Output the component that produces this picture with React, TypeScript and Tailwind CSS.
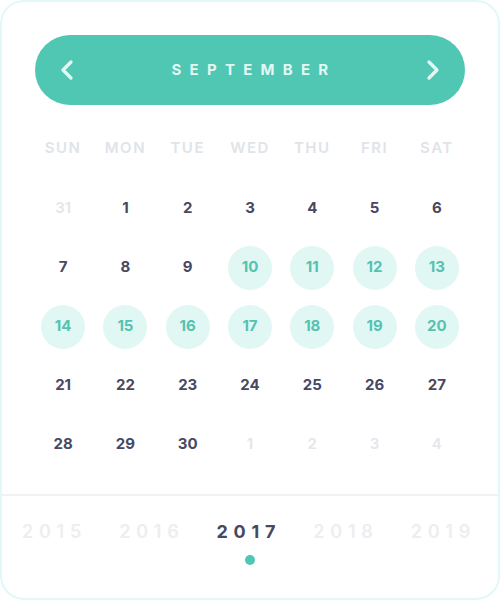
import { ChevronLeft, ChevronRight } from 'lucide-react';

const weekdays = ['SUN', 'MON', 'TUE', 'WED', 'THU', 'FRI', 'SAT'];

type Day = { n: number; muted?: boolean; picked?: boolean };

const days: Day[] = [
  { n: 31, muted: true },
  ...Array.from({ length: 30 }, (_, i) => ({ n: i + 1, picked: i + 1 >= 10 && i + 1 <= 20 })),
  { n: 1, muted: true },
  { n: 2, muted: true },
  { n: 3, muted: true },
  { n: 4, muted: true },
];

const years = [2015, 2016, 2017, 2018, 2019];

export default function App() {
  return (
    <div className="h-[600px] w-[500px] bg-white font-['Inter',sans-serif]">
      <div className="flex h-full w-full flex-col rounded-[24px] border-2 border-[#e2f8f8] bg-white">
        <div className="px-[33px] pt-[33px]">
          <div className="flex h-[70px] items-center justify-between rounded-full bg-[#4fc7b3] px-[16px] text-[#e3f8f4]">
            <ChevronLeft className="h-8 w-8" strokeWidth={2.5} />
            <span className="pl-[8px] text-[15px] font-bold tracking-[0.55em]">SEPTEMBER</span>
            <ChevronRight className="h-8 w-8" strokeWidth={2.5} />
          </div>
        </div>

        <div className="mt-[33px] grid grid-cols-7 px-[30px]">
          {weekdays.map((d) => (
            <div key={d} className="flex h-5 items-center justify-center text-[15px] font-semibold tracking-[0.1em] text-[#e0e4e9]">
              {d}
            </div>
          ))}
        </div>

        <div className="mt-[21px] grid grid-cols-7 px-[30px]">
          {days.map((d, i) => (
            <div key={i} className="flex h-[59px] items-center justify-center">
              <span
                className={
                  d.picked
                    ? 'flex h-11 w-11 items-center justify-center rounded-full bg-[#e1f7f3] text-[15px] font-bold text-[#55c2b1]'
                    : d.muted
                      ? 'text-[15px] font-semibold text-[#e3e6ea]'
                      : 'text-[15px] font-bold text-[#48485f]'
                }
              >
                {d.n}
              </span>
            </div>
          ))}
        </div>

        <div className="mt-[20px] border-t-2 border-[#f0f1f4]" />

        <div className="flex items-center justify-between pl-[20px] pr-[22px] pt-[22px]">
          {years.map((y) => (
            <span
              key={y}
              className={
                y === 2017
                  ? 'text-[18px] font-bold tracking-[0.32em] text-[#48485f]'
                  : 'text-[18px] font-semibold tracking-[0.32em] text-[#eceef1]'
              }
            >
              {y}
            </span>
          ))}
        </div>
        <div className="mt-[10px] flex justify-center">
          <span className="h-[10px] w-[10px] rounded-full bg-[#4fc7b3]" />
        </div>
      </div>
    </div>
  );
}
